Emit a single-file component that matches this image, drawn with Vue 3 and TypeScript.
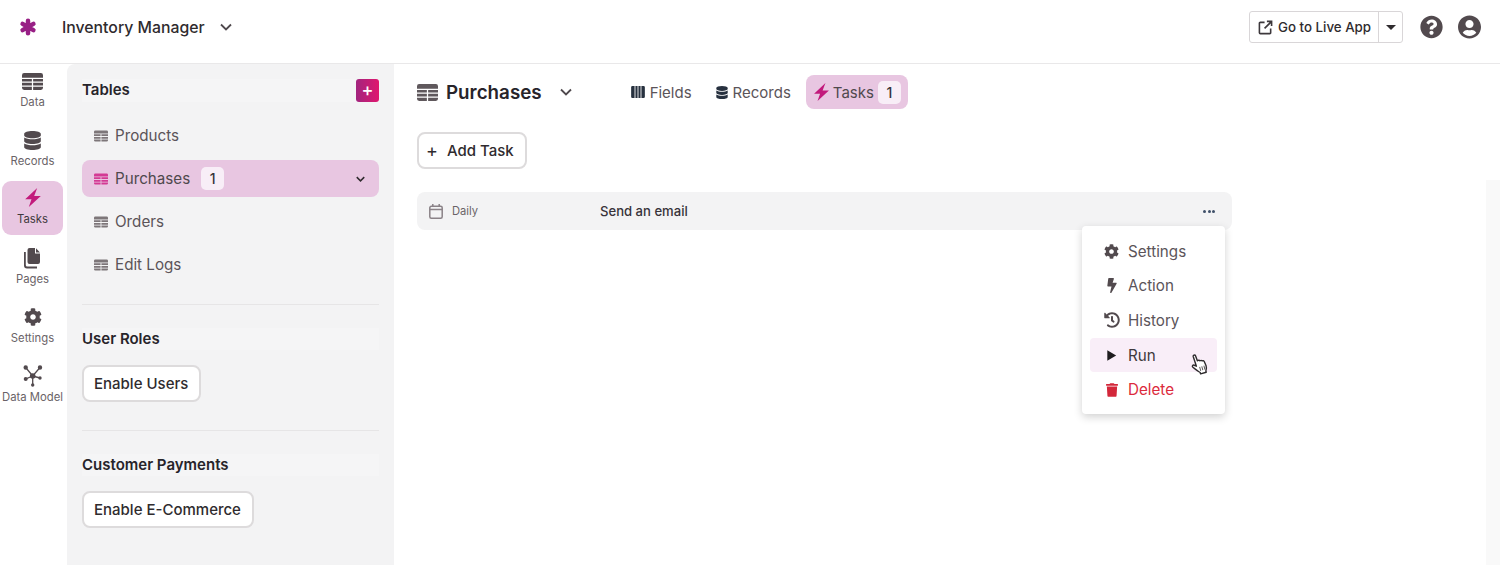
<script setup lang="ts">
type Icon = { box: string; d: string; lines?: string }

const icons: Record<string, Icon> = {
  table: {
    box: '0 0 20 16',
    d: 'M2 0h16a2 2 0 0 1 2 2v2.400H0V2a2 2 0 0 1 2-2zM0 5.600h9.400v2.500H0zM10.600 5.600H20v2.500h-9.400zM0 9.300h9.400v2.500H0zM10.600 9.300H20v2.500h-9.400zM0 13h9.400v3H2a2 2 0 0 1-2-2zM10.600 13H20v1a2 2 0 0 1-2 2h-7.400z',
  },
  db: {
    box: '0 0 448 512',
    d: 'M448 73.143v45.714C448 159.143 347.667 192 224 192S0 159.143 0 118.857V73.143C0 32.857 100.333 0 224 0s224 32.857 224 73.143zM448 176v102.857C448 319.143 347.667 352 224 352S0 319.143 0 278.857V176c48.125 33.143 136.208 48.572 224 48.572S399.874 209.143 448 176zm0 160v102.857C448 479.143 347.667 512 224 512S0 479.143 0 438.857V336c48.125 33.143 136.208 48.572 224 48.572S399.874 369.143 448 336z',
  },
  zap: { box: '0 0 47 57', d: 'M36 0 0 34h19l-8 23 36-33H27z' },
  pages: {
    box: '0 0 17 21',
    d: 'M5.500 0H11v5.500h5V14a2 2 0 0 1-2 2H5.500a2 2 0 0 1-2-2V2a2 2 0 0 1 2-2zM12 .3l4 4.200h-4zM0 4h1.800v13a1.500 1.500 0 0 0 1.500 1.500H13v2H3a3 3 0 0 1-3-3z',
  },
  gear: {
    box: '0 0 512 512',
    d: 'M487.400 315.700l-42.600-24.600c4.300-23.200 4.300-47 0-70.200l42.600-24.600c4.900-2.800 7.100-8.600 5.500-14-11.100-35.600-30-67.800-54.700-94.600-3.800-4.100-10-5.100-14.800-2.300L380.800 110c-17.900-15.400-38.500-27.300-60.800-35.100V25.800c0-5.600-3.900-10.500-9.400-11.700-36.700-8.200-74.300-7.800-109.200 0-5.500 1.200-9.400 6.100-9.400 11.700V75c-22.200 7.900-42.800 19.800-60.800 35.100L88.700 85.500c-4.900-2.800-11-1.900-14.800 2.300-24.700 26.700-43.600 58.900-54.700 94.600-1.700 5.400.6 11.200 5.500 14L67.300 221c-4.300 23.200-4.300 47 0 70.200l-42.600 24.600c-4.900 2.800-7.100 8.600-5.500 14 11.100 35.600 30 67.800 54.700 94.600 3.800 4.100 10 5.100 14.800 2.300l42.600-24.600c17.900 15.400 38.500 27.300 60.800 35.100v49.200c0 5.600 3.900 10.500 9.400 11.700 36.700 8.200 74.300 7.800 109.200 0 5.500-1.200 9.400-6.100 9.400-11.700v-49.200c22.200-7.900 42.800-19.800 60.800-35.100l42.600 24.600c4.900 2.800 11 1.900 14.800-2.300 24.700-26.700 43.600-58.900 54.700-94.600 1.500-5.500-.7-11.300-5.600-14.100zM256 336c-44.100 0-80-35.900-80-80s35.900-80 80-80 80 35.900 80 80-35.900 80-80 80z',
  },
  model: {
    box: '0 0 22 22',
    lines: 'M3.700 2.500 10.700 11 18 2.500M3.700 14l7-3 7.300 2M10.700 11v9',
    d: 'M7.900 11a2.800 2.800 0 1 0 5.600 0a2.800 2.800 0 1 0-5.600 0zM1.500 2.500a2.200 2.200 0 1 0 4.400 0a2.200 2.200 0 1 0-4.400 0zM15.800 2.500a2.200 2.200 0 1 0 4.400 0a2.200 2.200 0 1 0-4.400 0zM1.700 14a2 2 0 1 0 4 0a2 2 0 1 0-4 0zM16.300 13a1.700 1.700 0 1 0 3.400 0a1.700 1.700 0 1 0-3.400 0zM9 20a1.700 1.700 0 1 0 3.400 0a1.700 1.700 0 1 0-3.400 0z',
  },
  action: {
    box: '0 0 320 512',
    d: 'M296 160H180.600l42.600-129.800C227.200 15 215.700 0 200 0H56C44 0 33.800 8.900 32.200 20.800l-32 240C-1.700 275.200 9.500 288 24 288h118.700L96.600 482.500c-3.600 15.200 8 29.500 23.300 29.500 8.400 0 16.400-4.400 20.800-12l176-304c9.300-15.900-2.200-36-20.700-36z',
  },
  history: {
    box: '0 0 512 512',
    d: 'M504 255.531c.253 136.640-111.180 248.372-247.820 248.468-59.015.042-113.223-20.530-155.822-54.911-11.077-8.940-11.905-25.541-1.839-35.607l11.267-11.267c8.609-8.609 22.353-9.551 31.891-1.984C173.062 425.135 212.781 440 256 440c101.705 0 184-82.311 184-184 0-101.705-82.311-184-184-184-48.814 0-93.149 18.969-126.068 49.932l50.754 50.754c10.080 10.080 2.941 27.314-11.313 27.314H24c-8.837 0-16-7.163-16-16V38.627c0-14.254 17.234-21.393 27.314-11.314l49.372 49.372C129.209 34.136 189.552 8 256 8c136.810 0 247.747 110.780 248 247.531zm-180.912 78.784l9.823-12.630c8.138-10.463 6.253-25.542-4.210-33.679L288 256.349V152c0-13.255-10.745-24-24-24h-16c-13.255 0-24 10.745-24 24v135.651l65.409 50.874c10.463 8.137 25.541 6.253 33.679-4.210z',
  },
  play: { box: '0 0 16 16', d: 'M3.500 2.500 13 8l-9.500 5.500z' },
  trash: {
    box: '0 0 448 512',
    d: 'M432 32H312l-9.400-18.700A24 24 0 0 0 281.100 0H166.800a23.720 23.720 0 0 0-21.400 13.300L136 32H16A16 16 0 0 0 0 48v32a16 16 0 0 0 16 16h416a16 16 0 0 0 16-16V48a16 16 0 0 0-16-16zM53.200 467a48 48 0 0 0 47.900 45h245.800a48 48 0 0 0 47.900-45L416 128H32z',
  },
  help: {
    box: '0 0 512 512',
    d: 'M504 256c0 136.997-111.043 248-248 248S8 392.997 8 256C8 119.083 119.043 8 256 8s248 111.083 248 248zM262.655 90c-54.497 0-89.255 22.957-116.549 63.758-3.536 5.286-2.353 12.415 2.715 16.258l34.699 26.310c5.205 3.947 12.621 3.008 16.665-2.122 17.864-22.658 30.113-35.797 57.303-35.797 20.429 0 45.698 13.148 45.698 32.958 0 14.976-12.363 22.667-32.534 33.976C247.128 238.528 216 254.941 216 296v4c0 6.627 5.373 12 12 12h56c6.627 0 12-5.373 12-12v-1.333c0-28.462 83.186-29.647 83.186-106.667 0-58.002-60.165-102-116.531-102zM256 338c-25.365 0-46 20.635-46 46 0 25.364 20.635 46 46 46s46-20.636 46-46c0-25.365-20.635-46-46-46z',
  },
  user: {
    box: '0 0 496 512',
    d: 'M248 8C111 8 0 119 0 256s111 248 248 248 248-111 248-248S385 8 248 8zm0 96c48.600 0 88 39.400 88 88s-39.400 88-88 88-88-39.400-88-88 39.400-88 88-88zm0 344c-58.700 0-111.300-26.600-146.500-68.200 18.800-35.400 55.600-59.800 98.500-59.800 2.400 0 4.800.4 7.100 1.100 13 4.200 26.600 6.900 40.900 6.900 14.300 0 28-2.700 40.900-6.900 2.300-.7 4.700-1.100 7.100-1.100 42.900 0 79.700 24.400 98.500 59.800C359.300 421.400 306.700 448 248 448z',
  },
  fields: { box: '0 0 16 14', d: 'M1.500 0H4v14H1.500A1.500 1.500 0 0 1 0 12.500v-11A1.500 1.500 0 0 1 1.500 0zM5 0h2.500v14H5zM8.500 0H11v14H8.500zM12 0h2.500A1.500 1.500 0 0 1 16 1.500v11a1.500 1.500 0 0 1-1.500 1.500H12z' },
}

const railItems = [
  { label: 'Data', icon: 'table', w: 21, h: 17 },
  { label: 'Records', icon: 'db', w: 17, h: 19 },
  { label: 'Tasks', icon: 'zap', w: 16, h: 19, active: true },
  { label: 'Pages', icon: 'pages', w: 17, h: 21 },
  { label: 'Settings', icon: 'gear', w: 18, h: 18 },
  { label: 'Data Model', icon: 'model', w: 22, h: 22 },
]

const tables = [
  { name: 'Products' },
  { name: 'Purchases', count: 1, active: true },
  { name: 'Orders' },
  { name: 'Edit Logs' },
]

const menuItems = [
  { label: 'Settings', icon: 'gear', w: 15, h: 15 },
  { label: 'Action', icon: 'action', w: 10, h: 15 },
  { label: 'History', icon: 'history', w: 16, h: 16 },
  { label: 'Run', icon: 'play', w: 15, h: 15, hover: true },
  { label: 'Delete', icon: 'trash', w: 12, h: 14, danger: true },
]
</script>

<template>
  <div class="app">
    <header class="topbar">
      <svg class="logo" viewBox="0 0 20 20" width="18" height="18">
        <g stroke="#981f85" stroke-width="5" stroke-linecap="round">
          <path d="M10 3v14M4 6.500l12 7M16 6.500l-12 7" />
        </g>
      </svg>
      <span class="app-name">Inventory Manager</span>
      <svg class="chev" viewBox="0 0 12 8" width="12" height="8"><path d="M1 1.500 6 6.500l5-5" /></svg>
      <div class="top-right">
        <div class="live">
          <span class="live-main">
            <svg viewBox="0 0 16 16" width="15" height="15" fill="none" stroke="#3d383c" stroke-width="1.700">
              <path d="M7 2.500H2.500a1 1 0 0 0-1 1v10a1 1 0 0 0 1 1h10a1 1 0 0 0 1-1V9M9.500 1.500h5v5M14.500 1.500 7 9" />
            </svg>
            Go to Live App
          </span>
          <span class="live-drop"><i class="caret"></i></span>
        </div>
        <svg :viewBox="icons.help.box" width="23" height="24" fill="#524a4e"><path :d="icons.help.d" /></svg>
        <svg :viewBox="icons.user.box" width="23" height="24" fill="#524a4e"><path :d="icons.user.d" /></svg>
      </div>
    </header>

    <div class="body">
      <nav class="rail">
        <div v-for="item in railItems" :key="item.label" class="rail-item" :class="{ active: item.active }">
          <span class="rail-icon">
            <svg :viewBox="icons[item.icon].box" :width="item.w" :height="item.h">
              <path v-if="icons[item.icon].lines" :d="icons[item.icon].lines" fill="none" stroke="#524a4e" stroke-width="1.300" />
              <path :d="icons[item.icon].d" />
            </svg>
          </span>
          <span class="rail-label">{{ item.label }}</span>
        </div>
      </nav>

      <aside class="sidebar">
        <div class="side-title">
          <span>Tables</span>
          <span class="plus">+</span>
        </div>
        <ul class="table-list">
          <li v-for="t in tables" :key="t.name" class="table-row" :class="{ active: t.active }">
            <svg :viewBox="icons.table.box" width="14" height="12"><path :d="icons.table.d" /></svg>
            <span>{{ t.name }}</span>
            <span v-if="t.count" class="badge">{{ t.count }}</span>
            <svg v-if="t.active" class="row-chev" viewBox="0 0 12 8" width="9" height="6"><path d="M1 1.500 6 6.500l5-5" /></svg>
          </li>
        </ul>
        <hr class="rule first" />
        <div class="side-title"><span>User Roles</span></div>
        <button class="btn side-btn">Enable Users</button>
        <hr class="rule" />
        <div class="side-title"><span>Customer Payments</span></div>
        <button class="btn side-btn">Enable E-Commerce</button>
      </aside>

      <main class="main">
        <div class="content">
          <div class="title-row">
            <svg class="title-icon" :viewBox="icons.table.box" width="21" height="17"><path :d="icons.table.d" /></svg>
            <h1>Purchases</h1>
            <svg class="chev" viewBox="0 0 12 8" width="12" height="8"><path d="M1 1.500 6 6.500l5-5" /></svg>
            <div class="tabs">
              <span class="tab">
                <svg :viewBox="icons.fields.box" width="14" height="12" fill="#27313f"><path :d="icons.fields.d" /></svg>
                Fields
              </span>
              <span class="tab">
                <svg :viewBox="icons.db.box" width="12" height="13" fill="#27313f"><path :d="icons.db.d" /></svg>
                Records
              </span>
              <span class="tab current">
                <svg :viewBox="icons.zap.box" width="15" height="18" fill="#c21a7c"><path :d="icons.zap.d" /></svg>
                Tasks
                <span class="badge">1</span>
              </span>
            </div>
          </div>

          <button class="btn add-task"><span class="add-plus">+</span>Add Task</button>

          <div class="task-wrap">
            <div class="task-row">
              <svg viewBox="0 0 14 15" width="14" height="15" fill="none" stroke="#8a8287" stroke-width="1.500">
                <rect x=".8" y="2.300" width="12.400" height="11.900" rx="1.500" />
                <path d="M.8 5.500h12.400M3.800 0v3M10.200 0v3" />
              </svg>
              <span class="freq">Daily</span>
              <span class="task-name">Send an email</span>
              <span class="dots"><i></i><i></i><i></i></span>
            </div>

            <div class="menu">
              <div v-for="m in menuItems" :key="m.label" class="menu-item" :class="{ hover: m.hover, danger: m.danger }">
                <span class="menu-icon">
                  <svg :viewBox="icons[m.icon].box" :width="m.w" :height="m.h"><path :d="icons[m.icon].d" /></svg>
                </span>
                <span>{{ m.label }}</span>
              </div>
              <svg class="cursor" viewBox="0 0 18 22" width="18" height="22">
                <g transform="rotate(-16 9 11)">
                  <path
                    d="M5.500 2.200c0-1.500 2.300-1.500 2.400 0l.4 5.300.7-.2c1-.2 1.500.2 1.800.9 1-.4 1.700-.1 2 .7 1-.3 1.700.2 1.900 1.200l.6 4.600c.2 2-.8 3.600-1.600 4.900v1.300H7.800v-1.400c-1.700-1.600-3.800-4.500-5.600-7-.9-1.300.7-2.600 1.900-1.600l1.800 1.500z"
                    fill="#fff" stroke="#2d2a2c" stroke-width="1.400" stroke-linejoin="round"
                  />
                  <path d="M8.800 14v4M11 14v4M13.200 14v4" stroke="#5c585a" stroke-width="1" />
                </g>
              </svg>
            </div>
          </div>
        </div>
        <div class="track"></div>
      </main>
    </div>
  </div>
</template>

<style>
html,
body {
  margin: 0;
  background: #fff;
}
</style>

<style scoped>
.app {
  width: 1500px;
  height: 565px;
  overflow: hidden;
  display: flex;
  flex-direction: column;
  font-family: Inter, "Liberation Sans", sans-serif;
  color: #4f494d;
}

.topbar {
  height: 64px;
  flex: none;
  box-sizing: border-box;
  border-bottom: 1px solid #e9e8e9;
  display: flex;
  align-items: center;
  padding: 0 19px 9px 19px;
}

.logo {
  margin-right: 25px;
}

.app-name {
  font-size: 15.800px;
  font-weight: 500;
  color: #2f2b2e;
  margin-right: 15px;
}

.chev {
  fill: none;
  stroke: #4f494d;
  stroke-width: 1.800;
}

.top-right {
  margin-left: auto;
  display: flex;
  align-items: center;
  gap: 15px;
}

.live {
  display: flex;
  height: 30px;
  border: 1px solid #d9d6d8;
  border-radius: 3px;
  margin-right: 2px;
  font-size: 13.300px;
  font-weight: 500;
  color: #2f2b2e;
}

.live-main {
  display: flex;
  align-items: center;
  gap: 5px;
  padding: 0 7px 0 8px;
  border-right: 1px solid #d9d6d8;
}

.live-drop {
  width: 23px;
  display: flex;
  align-items: center;
  justify-content: center;
}

.caret {
  border: 5px solid transparent;
  border-top-color: #2f2b2e;
  border-bottom: 0;
}

.body {
  flex: 1;
  display: flex;
  min-height: 0;
}

.rail {
  width: 67px;
  flex: none;
  display: flex;
  flex-direction: column;
  gap: 5px;
  box-sizing: border-box;
  padding-left: 2px;
  margin-top: -1px;
}

.rail-item {
  width: 61px;
  height: 54px;
  border-radius: 9px;
  display: flex;
  flex-direction: column;
  align-items: center;
  fill: #524a4e;
}

.rail-item.active {
  background: #e8c6e1;
  fill: #c21a7c;
}

.rail-icon {
  height: 36px;
  flex: none;
  display: flex;
  align-items: center;
  justify-content: center;
}

.rail-label {
  font-size: 11.300px;
  line-height: 14px;
  margin-top: -4px;
  white-space: nowrap;
  color: #6a6367;
}

.rail-item.active .rail-icon {
  height: 33px;
}

.rail-item.active .rail-label {
  margin-top: -2px;
  color: #3f393d;
}

.sidebar {
  width: 327px;
  flex: none;
  box-sizing: border-box;
  background: #f3f3f4;
  border-top-left-radius: 8px;
  padding: 15px 15px 0;
}

.side-title {
  min-height: 22px;
  display: flex;
  align-items: center;
  justify-content: space-between;
  background: #f5f5f6;
  font-size: 15px;
  font-weight: 600;
  color: #27242a;
}

.side-title > span:first-child {
  margin-top: -2px;
}

.plus {
  width: 23px;
  height: 23px;
  border-radius: 3px;
  background: linear-gradient(90deg, #a2257f, #e0176e);
  color: #fff;
  font-size: 18px;
  font-weight: 500;
  line-height: 22px;
  text-align: center;
}

.table-list {
  list-style: none;
  margin: 15px 0 0;
  padding: 0;
  display: flex;
  flex-direction: column;
  gap: 6px;
}

.table-row {
  height: 37px;
  border-radius: 8px;
  display: flex;
  align-items: center;
  padding: 0 12px;
  font-size: 15.200px;
  color: #5b5459;
  fill: #7d7679;
}

.table-row > span:first-of-type {
  margin-left: 7px;
}

.table-row.active {
  background: #e8c6e1;
  color: #4f494d;
  fill: #d33a94;
}

.badge {
  width: 23px;
  height: 23px;
  border-radius: 5px;
  background: #f8eef7;
  color: #38333a;
  font-size: 14px;
  font-weight: 500;
  line-height: 23px;
  text-align: center;
}

.table-row .badge {
  margin-left: 11px;
}

.row-chev {
  margin-left: auto;
  margin-right: 2px;
  fill: none;
  stroke: #2f2b2e;
  stroke-width: 2;
}

.rule {
  border: 0;
  border-top: 1px solid #e6e5e6;
  margin: 28px 0 23px;
}

.rule.first {
  margin-top: 21px;
}

.btn {
  display: block;
  height: 37px;
  box-sizing: border-box;
  background: #fff;
  border: 2px solid #dddbdc;
  border-radius: 8px;
  padding: 0 11px 0 10px;
  font-family: inherit;
  font-size: 15px;
  font-weight: 500;
  color: #2f2b2e;
}

.side-btn {
  margin-top: 15px;
}

.main {
  flex: 1;
  min-width: 0;
  display: flex;
}

.content {
  flex: 1;
  min-width: 0;
  box-sizing: border-box;
  padding: 11px 0 0 23px;
}

.title-row {
  height: 34px;
  display: flex;
  align-items: center;
}

.title-icon {
  fill: #5f585c;
  margin-right: 8px;
}

h1 {
  margin: 0 18px 0 0;
  font-size: 18.800px;
  font-weight: 600;
  color: #27242a;
}

.tabs {
  display: flex;
  align-items: center;
  margin-left: 51px;
  gap: 8px;
}

.tab {
  height: 34px;
  display: flex;
  align-items: center;
  gap: 5px;
  padding: 0 8px;
  border-radius: 8px;
  font-size: 15px;
  color: #5b5459;
}

.tab.current {
  background: #e8c6e1;
  color: #4f494d;
  gap: 4px;
  padding: 0 7px 0 8px;
  margin-left: -1px;
}

.add-task {
  margin-top: 23px;
  display: flex;
  align-items: center;
  width: 110px;
  white-space: nowrap;
  padding-left: 7px;
}

.add-plus {
  font-size: 18px;
  font-weight: 400;
  margin-right: 9px;
  line-height: 1;
}

.task-wrap {
  position: relative;
  margin-top: 23px;
  width: 815px;
}

.task-row {
  height: 38px;
  box-sizing: border-box;
  background: #f3f3f4;
  border-radius: 8px;
  display: flex;
  align-items: center;
  padding: 0 17px 0 12px;
}

.freq {
  width: 148px;
  margin-left: 9px;
  font-size: 11.200px;
  color: #6a6367;
}

.task-name {
  font-size: 13.100px;
  font-weight: 500;
  color: #38333a;
}

.dots {
  margin-left: auto;
  display: flex;
  gap: 1.500px;
}

.dots i {
  width: 3px;
  height: 3px;
  border-radius: 50%;
  background: #3f5069;
}

.menu {
  position: absolute;
  left: 665px;
  top: 34px;
  width: 143px;
  box-sizing: border-box;
  padding: 8px 8px 7px;
  background: #fff;
  border-radius: 4px;
  box-shadow: 0 3px 9px rgba(0, 0, 0, 0.18);
}

.menu-item {
  height: 34.600px;
  display: flex;
  align-items: center;
  border-radius: 4px;
  font-size: 15.200px;
  color: #5b5459;
  fill: #524a4e;
}

.menu-icon {
  width: 38px;
  flex: none;
  display: flex;
  justify-content: center;
  padding-left: 5px;
  box-sizing: border-box;
}

.menu-item.hover {
  background: #f9eef8;
  color: #3f393d;
  fill: #1e1c1e;
}

.menu-item.danger {
  color: #dc2a3c;
  fill: #d3273a;
}

.cursor {
  position: absolute;
  left: 108px;
  top: 127px;
}

.track {
  width: 14px;
  flex: none;
  margin-top: 116px;
  background: #f9f9f9;
}
</style>
